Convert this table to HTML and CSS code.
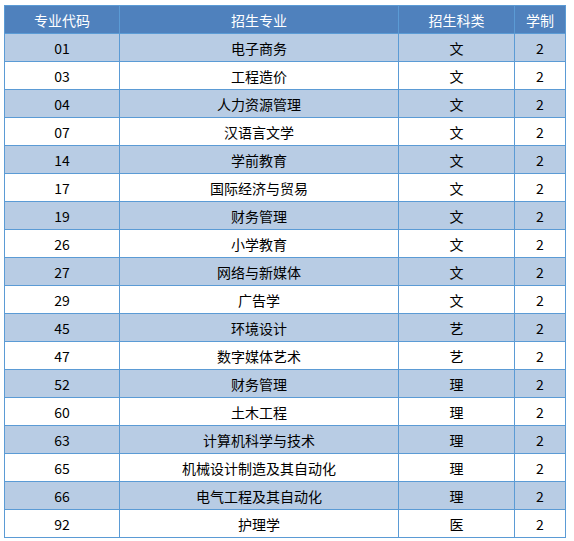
FILE: index.html
```html
<!DOCTYPE html>
<html>
<head>
<meta charset="utf-8">
<link rel="stylesheet" href="styles.css">
</head>
<body>
<table class="tbl">
<colgroup><col class="c1"><col class="c2"><col class="c3"><col class="c4"></colgroup>
<thead>
<tr><th>专业代码</th><th>招生专业</th><th>招生科类</th><th>学制</th></tr>
</thead>
<tbody>
<tr class="alt"><td>01</td><td>电子商务</td><td>文</td><td>2</td></tr>
<tr><td>03</td><td>工程造价</td><td>文</td><td>2</td></tr>
<tr class="alt"><td>04</td><td>人力资源管理</td><td>文</td><td>2</td></tr>
<tr><td>07</td><td>汉语言文学</td><td>文</td><td>2</td></tr>
<tr class="alt"><td>14</td><td>学前教育</td><td>文</td><td>2</td></tr>
<tr><td>17</td><td>国际经济与贸易</td><td>文</td><td>2</td></tr>
<tr class="alt"><td>19</td><td>财务管理</td><td>文</td><td>2</td></tr>
<tr><td>26</td><td>小学教育</td><td>文</td><td>2</td></tr>
<tr class="alt"><td>27</td><td>网络与新媒体</td><td>文</td><td>2</td></tr>
<tr><td>29</td><td>广告学</td><td>文</td><td>2</td></tr>
<tr class="alt"><td>45</td><td>环境设计</td><td>艺</td><td>2</td></tr>
<tr><td>47</td><td>数字媒体艺术</td><td>艺</td><td>2</td></tr>
<tr class="alt"><td>52</td><td>财务管理</td><td>理</td><td>2</td></tr>
<tr><td>60</td><td>土木工程</td><td>理</td><td>2</td></tr>
<tr class="alt"><td>63</td><td>计算机科学与技术</td><td>理</td><td>2</td></tr>
<tr><td>65</td><td>机械设计制造及其自动化</td><td>理</td><td>2</td></tr>
<tr class="alt"><td>66</td><td>电气工程及其自动化</td><td>理</td><td>2</td></tr>
<tr><td>92</td><td>护理学</td><td>医</td><td>2</td></tr>
</tbody>
</table>
</body>
</html>
```
FILE: styles.css
```css
html, body {
  margin: 0;
  padding: 0;
  background: #ffffff;
}
body {
  padding: 5px 0 0 4px;
  font-family: "Noto Sans CJK SC", "Microsoft YaHei", sans-serif;
}
.tbl {
  border-collapse: collapse;
  width: 561px;
  table-layout: fixed;
  border: 1px solid #5b9bd5;
}
.c1 { width: 115px; }
.c2 { width: 279px; }
.c3 { width: 116px; }
.c4 { width: 51px; }
.tbl th, .tbl td {
  border: 1px solid #5b9bd5;
  height: 28px;
  box-sizing: border-box;
  padding: 0;
  text-align: center;
  vertical-align: middle;
  line-height: 16px;
  font-size: 14px;
}
.tbl th {
  background: #4f81bd;
  color: #ffffff;
  font-weight: normal;
}
.tbl td {
  color: #000000;
}
.tbl tr.alt td {
  background: #b8cce4;
}
```
